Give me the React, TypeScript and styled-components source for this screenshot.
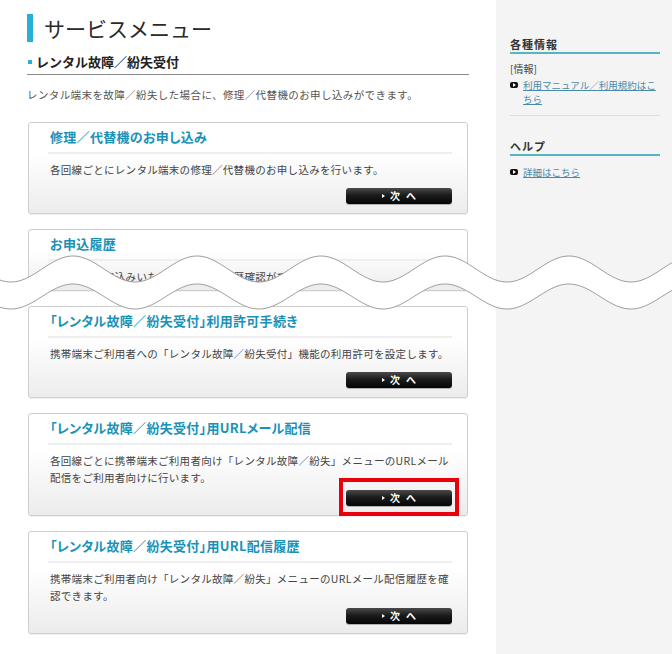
import React from "react";
import styled, { createGlobalStyle } from "styled-components";

// STYLES
const GlobalStyle = createGlobalStyle`
  html, body {
    margin: 0;
    padding: 0;
    background: #fff;
  }

  body {
    font-family: "Noto Sans CJK JP", "Noto Sans", sans-serif;
    color: #333;
  }
`;

const Page = styled.div`
  position: relative;
  display: grid;
  grid-template-columns: 496px 176px;
  width: 672px;
  min-height: 654px;
  overflow: hidden;
`;

const Main = styled.main`
  padding: 14px 27px 20px 27px;
`;

const PageTitle = styled.h1`
  margin: 0;
  display: flex;
  align-items: center;
  gap: 11px;
  font-size: 21px;
  font-weight: 400;
  line-height: 28px;
  color: #2a2a2a;

  &::before {
    content: "";
    width: 6px;
    height: 28px;
    background: #27b0d6;
  }
`;

const SectionHeading = styled.h2`
  margin: 12px 0 0;
  padding: 0 0 4px 1px;
  display: flex;
  align-items: center;
  gap: 4px;
  font-size: 13px;
  font-weight: 700;
  line-height: 16px;
  color: #222;
  border-bottom: 1px solid #8a8a8a;

  &::before {
    content: "";
    width: 4px;
    height: 4px;
    background: #2ab0d8;
  }
`;

const Lead = styled.p`
  margin: 12px 0 0;
  font-size: 10.5px;
  line-height: 16px;
  letter-spacing: 0.4px;
  color: #555;
`;

const CardList = styled.div`
  margin: 19px 1px 0;
  display: flex;
  flex-direction: column;
  gap: 15px;
`;

const Card = styled.section<{ $truncated?: boolean }>`
  display: flex;
  flex-direction: column;
  padding: 4px 15px ${(p) => (p.$truncated ? "5px" : "9px")} 21px;
  border: 1px solid #cfcfcf;
  border-radius: 3px;
  background: linear-gradient(180deg, #ffffff 35%, #ececec 100%);
  box-shadow: 0 1px 1px rgba(0, 0, 0, 0.06);
`;

const CardTitle = styled.h3`
  margin: 0 0 0 -2px;
  padding: 0 0 5px 2px;
  font-size: 13px;
  font-weight: 700;
  line-height: 20px;
  letter-spacing: 0.3px;
  font-feature-settings: "palt";
  color: #1a92b8;
  border-bottom: 2px solid #efefef;
`;

const Description = styled.p<{ $compact?: boolean }>`
  margin: 7px 0 0;
  min-height: ${(p) => (p.$compact ? "0" : "23px")};
  font-size: 10.5px;
  line-height: 17px;
  letter-spacing: 0.3px;
  white-space: nowrap;
  color: #444;
`;

const Actions = styled.div<{ $highlighted?: boolean }>`
  position: relative;
  align-self: flex-end;
  margin-top: 4px;

  &::after {
    content: "";
    display: ${(p) => (p.$highlighted ? "block" : "none")};
    position: absolute;
    inset: -12px -7px -10px -7px;
    border: 4px solid #e8000d;
    pointer-events: none;
  }
`;

const NextButton = styled.a`
  display: flex;
  align-items: center;
  justify-content: center;
  width: 106px;
  height: 16px;
  border-radius: 3px;
  background: linear-gradient(180deg, #4a4a4a 0%, #1c1c1c 45%, #050505 100%);
  box-shadow: 0 1px 0 rgba(0, 0, 0, 0.25);
  color: #fff;
  font-size: 10px;
  font-weight: 700;
  line-height: 16px;
  text-decoration: none;
  cursor: pointer;

  &::before {
    content: "";
    margin-right: 5px;
    border-left: 3px solid #fff;
    border-top: 2px solid transparent;
    border-bottom: 2px solid transparent;
  }
`;

const Gap = styled.span`
  display: inline-block;
  width: 6px;
`;

const Sidebar = styled.aside`
  background: #f4f4f4;
  padding: 36px 12px 0 14px;
`;

const SideSection = styled.div<{ $divided?: boolean }>`
  padding-bottom: 9px;
  border-bottom: ${(p) => (p.$divided ? "1px solid #dcdcdc" : "none")};

  & + & {
    margin-top: 22px;
  }
`;

const SideHeading = styled.h4`
  margin: 0;
  font-size: 11px;
  font-weight: 700;
  line-height: 16px;
  letter-spacing: 1px;
  color: #333;
  border-bottom: 2px solid #56b5c2;
`;

const SideLabel = styled.div`
  margin-top: 8px;
  font-size: 10px;
  line-height: 14px;
  color: #444;
`;

const SideLinks = styled.ul<{ $first?: boolean }>`
  list-style: none;
  margin: ${(p) => (p.$first ? "9px" : "2px")} 0 0;
  padding: 0;
`;

const SideLinkItem = styled.li`
  display: flex;
  align-items: flex-start;
  gap: 5px;
`;

const Bullet = styled.span`
  flex: none;
  position: relative;
  width: 8px;
  height: 6px;
  margin-top: 4px;
  border-radius: 2px;
  background: #111;

  &::after {
    content: "";
    position: absolute;
    top: 1px;
    left: 3px;
    border-left: 3px solid #fff;
    border-top: 2px solid transparent;
    border-bottom: 2px solid transparent;
  }
`;

const SideLink = styled.a`
  font-size: 9.5px;
  line-height: 14px;
  color: #4a8aa8;
  text-decoration: underline;
  cursor: pointer;
`;

const Cut = styled.svg`
  position: absolute;
  left: 0;
  top: 240px;
  width: 672px;
  height: 80px;
  pointer-events: none;
`;

// WAVE (the screenshot is cut between two wavy edges)
const PERIOD = 124;
const PHASE = 73;
const TOP = 240;

const wavePoints = (mid: number, amp: number) => {
  const pts: [number, number][] = [];
  for (let x = 0; x <= 672; x += 2) {
    const y = mid - amp * Math.cos((2 * Math.PI * (x - PHASE)) / PERIOD);
    pts.push([x, y - TOP]);
  }
  return pts;
};

const upper = wavePoints(269, 13);
const lower = wavePoints(296.5, 12.5);
const toLine = (pts: [number, number][]) =>
  pts.map(([x, y], i) => `${i ? "L" : "M"}${x} ${y.toFixed(2)}`).join(" ");
const band =
  toLine(upper) +
  " " +
  [...lower]
    .reverse()
    .map(([x, y]) => `L${x} ${y.toFixed(2)}`)
    .join(" ") +
  " Z";

const cards = [
  {
    title: "修理／代替機のお申し込み",
    text: ["各回線ごとにレンタル端末の修理／代替機のお申し込みを行います。"],
  },
  {
    title: "お申込履歴",
    text: ["各回線のお申込みいただいた内容の履歴確認ができます。"],
    truncated: true,
  },
  {
    title: "「レンタル故障／紛失受付」利用許可手続き",
    text: ["携帯端末ご利用者への「レンタル故障／紛失受付」機能の利用許可を設定します。"],
  },
  {
    title: "「レンタル故障／紛失受付」用URLメール配信",
    text: [
      "各回線ごとに携帯端末ご利用者向け「レンタル故障／紛失」メニューのURLメール",
      "配信をご利用者向けに行います。",
    ],
    highlighted: true,
  },
  {
    title: "「レンタル故障／紛失受付」用URL配信履歴",
    text: [
      "携帯端末ご利用者向け「レンタル故障／紛失」メニューのURLメール配信履歴を確",
      "認できます。",
    ],
  },
];

const App: React.FC = () => {
  return (
    <>
      <GlobalStyle />
      <Page>
        <Main>
          <PageTitle>サービスメニュー</PageTitle>
          <SectionHeading>レンタル故障／紛失受付</SectionHeading>
          <Lead>
            レンタル端末を故障／紛失した場合に、修理／代替機のお申し込みができます。
          </Lead>

          <CardList>
            {cards.map((card) => (
              <Card key={card.title} $truncated={card.truncated}>
                <CardTitle>{card.title}</CardTitle>
                <Description $compact={card.truncated}>
                  {card.text.map((line, i) => (
                    <React.Fragment key={i}>
                      {i > 0 && <br />}
                      {line}
                    </React.Fragment>
                  ))}
                </Description>
                {!card.truncated && (
                  <Actions $highlighted={card.highlighted}>
                    <NextButton>
                      次<Gap />へ
                    </NextButton>
                  </Actions>
                )}
              </Card>
            ))}
          </CardList>
        </Main>

        <Sidebar>
          <SideSection $divided>
            <SideHeading>各種情報</SideHeading>
            <SideLabel>[情報]</SideLabel>
            <SideLinks>
              <SideLinkItem>
                <Bullet />
                <SideLink>利用マニュアル／利用規約はこちら</SideLink>
              </SideLinkItem>
            </SideLinks>
          </SideSection>
          <SideSection>
            <SideHeading>ヘルプ</SideHeading>
            <SideLinks $first>
              <SideLinkItem>
                <Bullet />
                <SideLink>詳細はこちら</SideLink>
              </SideLinkItem>
            </SideLinks>
          </SideSection>
        </Sidebar>

        <Cut viewBox="0 0 672 80" aria-hidden="true">
          <path d={band} fill="#fff" />
          <path d={toLine(upper)} fill="none" stroke="#a0a0a0" strokeWidth="1" />
          <path d={toLine(lower)} fill="none" stroke="#a0a0a0" strokeWidth="1" />
        </Cut>
      </Page>
    </>
  );
};

export default App;
